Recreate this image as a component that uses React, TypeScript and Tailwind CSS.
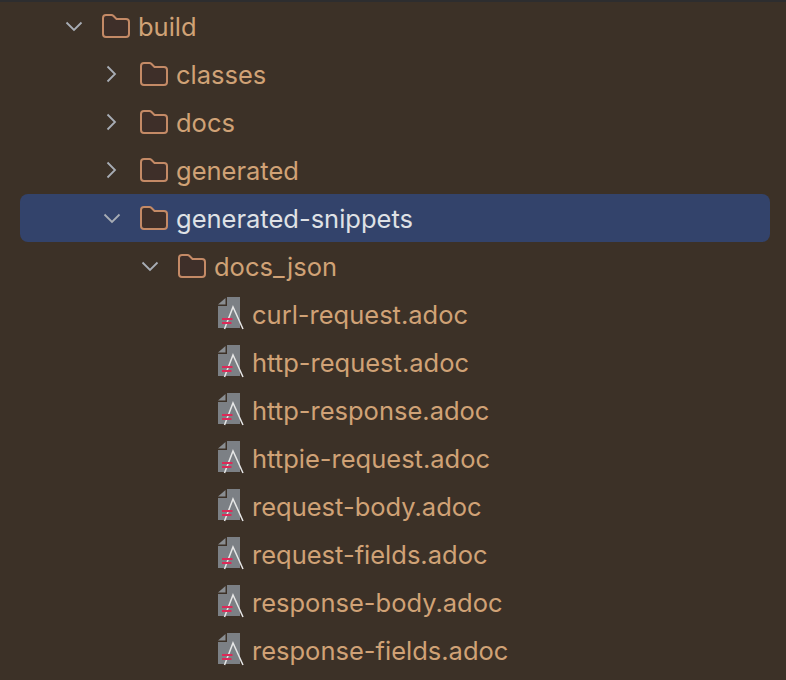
const folders = [
  { name: "build", depth: 0, open: true },
  { name: "classes", depth: 1, open: false },
  { name: "docs", depth: 1, open: false },
  { name: "generated", depth: 1, open: false },
  { name: "generated-snippets", depth: 1, open: true, selected: true },
  { name: "docs_json", depth: 2, open: true },
];

const files = [
  "curl-request.adoc",
  "http-request.adoc",
  "http-response.adoc",
  "httpie-request.adoc",
  "request-body.adoc",
  "request-fields.adoc",
  "response-body.adoc",
  "response-fields.adoc",
];

function Chevron({ open }: { open: boolean }) {
  return (
    <svg width="24" height="24" viewBox="0 0 24 24" fill="none" stroke="#a8adb5" strokeWidth="1.8" className="shrink-0">
      {open ? <path d="M4.5 8.5 L12 16 L19.5 8.5" /> : <path d="M7.5 4.5 L15 12 L7.5 19.5" />}
    </svg>
  );
}

function FolderIcon() {
  return (
    <svg width="28" height="24" viewBox="0 0 28 24" className="shrink-0">
      <path
        d="M1 4 Q1 1 4 1 L9.5 1 Q10.5 1 11.3 1.8 L14.5 5 L24 5 Q27 5 27 8 L27 20 Q27 23 24 23 L4 23 Q1 23 1 20 Z"
        fill="#3e2f29"
        stroke="#c48a66"
        strokeWidth="2"
      />
    </svg>
  );
}

function AdocIcon() {
  return (
    <svg width="26" height="34" viewBox="0 0 26 34" className="shrink-0">
      <path d="M0 7.5 L7.5 1 L7.5 7.5 Z" fill="#8a8e92" />
      <path d="M9 0 L22 0 L22 31 L0 31 L0 9 L9 9 Z" fill="#7c8085" />
      <path d="M6.5 32 L15 10 L25 32" fill="none" stroke="#e6e6e6" strokeWidth="1.5" />
      <path d="M4 22 L14.5 22 M4 26 L13.5 26" stroke="#dc2a58" strokeWidth="2" />
    </svg>
  );
}

export default function App() {
  return (
    <div className="w-[786px] h-[680px] overflow-hidden bg-[#3c3127] font-['Inter',sans-serif] font-[420] text-[25.5px] text-[#d0a276] border-t-2 border-[#2d2d2f]">
      <div className="flex flex-col">
        {folders.map((f) => (
          <div
            key={f.name}
            className={
              f.selected
                ? "h-12 w-[750px] ml-5 flex items-center rounded-lg bg-[#33436b] text-[#dfe1e5]"
                : "h-12 w-[750px] ml-5 flex items-center"
            }
          >
            {f.depth === 0 && <div className="w-[42px] shrink-0" />}
            {f.depth === 1 && <div className="w-[80px] shrink-0" />}
            {f.depth === 2 && <div className="w-[118px] shrink-0" />}
            <Chevron open={f.open} />
            <div className="w-[16px] shrink-0" />
            <FolderIcon />
            <span className="ml-[8px] pt-[2px] whitespace-nowrap">{f.name}</span>
          </div>
        ))}
        {files.map((name) => (
          <div key={name} className="h-12 flex items-center pl-[218px]">
            <AdocIcon />
            <span className="ml-[8px] pt-[2px] whitespace-nowrap">{name}</span>
          </div>
        ))}
      </div>
    </div>
  );
}
